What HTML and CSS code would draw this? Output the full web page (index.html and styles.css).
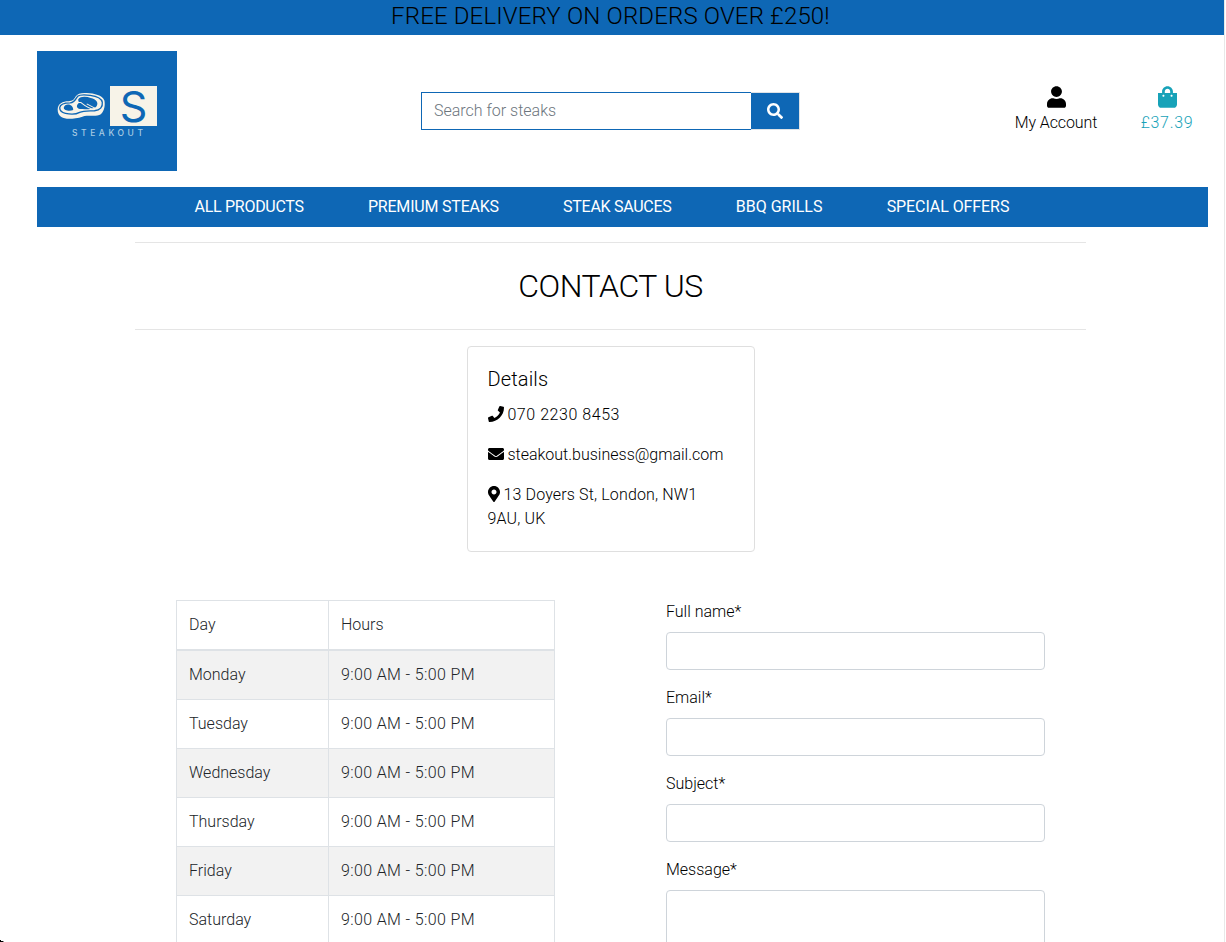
FILE: index.html
```html
<!DOCTYPE html>
<html lang="en">
<head>
<meta charset="utf-8">
<title>Steakout - Contact us</title>
<link rel="stylesheet" href="styles.css">
</head>
<body>
<div class="page">
  <div class="banner"><span>FREE DELIVERY ON ORDERS OVER £250!</span></div>
  <header class="header">
    <a class="logo" href="#">
      <svg class="steak" viewBox="0 0 142 82" preserveAspectRatio="none"><path d="M2 53C2 35 17 28 34 28C46 28 50 24 55 14C61 4 72 2 88 3C111 4 134 10 140 25C144 43 138 65 125 70C111 75 92 70 75 75C60 80 42 82 29 81C12 79 2 70 2 53Z" fill="#f7f3e8"/><path d="M8 48C9 36 22 33 39 33C53 32 54 22 61 13C68 7 83 8 98 10C119 13 132 18 134 31C136 46 127 55 111 57C93 58 78 57 67 62C55 69 38 68 25 65C13 62 8 57 8 48Z" fill="none" stroke="#0e67b5" stroke-width="4"/><path d="M20 48C22 38 31 37 38 39C46 42 48 49 48 55C38 59 20 57 20 48ZM63 22C70 12 87 14 100 18C116 22 124 32 117 43C108 54 86 52 68 52C57 49 57 41 63 35C68 30 61 28 63 22Z" fill="#0e67b5"/><path d="M62 32L71 32Q92 50 112 53M88 36L112 49" fill="none" stroke="#f7f3e8" stroke-width="3"/></svg>
      <span class="logo-s">S</span>
      <span class="logo-name">STEAKOUT</span>
    </a>
    <form class="search">
      <input class="search-input" type="text" placeholder="Search for steaks">
      <button class="search-button" type="button" aria-label="Search"><svg viewBox="0 0 512 512"><path d="M505 442.700L405.300 343c-4.500-4.500-10.600-7-17-7H372c27.600-35.300 44-79.700 44-128C416 93.100 322.900 0 208 0S0 93.100 0 208s93.100 208 208 208c48.300 0 92.700-16.400 128-44v16.300c0 6.400 2.500 12.500 7 17l99.700 99.700c9.400 9.400 24.600 9.400 33.900 0l28.300-28.300c9.400-9.400 9.400-24.600.1-34zM208 336c-70.700 0-128-57.200-128-128 0-70.700 57.200-128 128-128 70.700 0 128 57.200 128 128 0 70.700-57.200 128-128 128z"/></svg></button>
    </form>
    <div class="tools">
      <a class="tool account" href="#"><svg viewBox="0 0 448 512"><path d="M224 256c70.700 0 128-57.300 128-128S294.700 0 224 0 96 57.300 96 128s57.300 128 128 128zm89.600 32h-16.700c-22.200 10.200-46.900 16-72.900 16s-50.600-5.800-72.900-16h-16.700C60.200 288 0 348.200 0 422.400V464c0 26.500 21.500 48 48 48h352c26.500 0 48-21.500 48-48v-41.600c0-74.200-60.200-134.400-134.400-134.400z"/></svg><span>My Account</span></a>
      <a class="tool bag" href="#"><svg viewBox="0 0 448 512"><path d="M352 160v-32C352 57.420 294.579 0 224 0 153.420 0 96 57.420 96 128v32H0v272c0 44.183 35.817 80 80 80h288c44.183 0 80-35.817 80-80V160h-96zm-192-32c0-35.290 28.710-64 64-64s64 28.710 64 64v32H160v-32zm160 120c-13.255 0-24-10.745-24-24s10.745-24 24-24 24 10.745 24 24-10.745 24-24 24zm-192 0c-13.255 0-24-10.745-24-24s10.745-24 24-24 24 10.745 24 24-10.745 24-24 24z"/></svg><span>£37.39</span></a>
    </div>
  </header>
  <nav class="nav"><a class="tight" href="#">ALL PRODUCTS</a><a class="snug" href="#">PREMIUM STEAKS</a><a class="tight" href="#">STEAK SAUCES</a><a href="#">BBQ GRILLS</a><a class="offers" href="#">SPECIAL OFFERS</a></nav>
  <main class="container">
    <h1 class="title"><span>CONTACT US</span></h1>
    <section class="card">
      <h2><span>Details</span></h2>
      <p><svg class="icon" viewBox="0 0 512 512"><path d="M493.400 24.600l-104-24c-11.300-2.600-22.900 3.300-27.500 13.900l-48 112c-4.200 9.800-1.400 21.300 6.900 28l60.600 49.600c-36 76.700-98.900 140.500-177.200 177.200l-49.600-60.600c-6.800-8.300-18.200-11.100-28-6.900l-112 48C3.900 366.500-2 378.100.6 389.400l24 104C27.100 504.200 36.700 512 48 512c256.100 0 464-207.500 464-464 0-11.200-7.700-20.900-18.600-23.400z"/></svg> <span class="phone">070 2230 8453</span></p>
      <p><svg class="icon" viewBox="0 0 512 512"><path d="M502.300 190.800c3.900-3.100 9.700-.2 9.700 4.700V400c0 26.500-21.500 48-48 48H48c-26.500 0-48-21.500-48-48V195.600c0-5 5.700-7.800 9.700-4.700 22.400 17.400 52.100 39.500 154.100 113.600 21.100 15.400 56.700 47.800 92.200 47.600 35.700.3 72-32.800 92.300-47.600 102-74.100 131.600-96.300 154-113.700zM256 320c23.200.4 56.600-29.200 73.400-41.400 132.700-96.300 142.800-104.700 173.400-128.700 5.800-4.500 9.200-11.500 9.200-18.900v-19c0-26.500-21.500-48-48-48H48c-26.500 0-48 21.500-48 48v19c0 7.400 3.400 14.300 9.200 18.900 30.600 23.900 40.700 32.400 173.400 128.700 16.800 12.200 50.200 41.800 73.400 41.400z"/></svg> <span class="mail">steakout.business@gmail.com</span></p>
      <p><svg class="icon pin" viewBox="0 0 384 512"><path d="M172.268 501.670C26.970 291.031 0 269.413 0 192 0 85.961 85.961 0 192 0s192 85.961 192 192c0 77.413-26.970 99.031-172.268 309.670-9.535 13.774-29.930 13.773-39.464 0zM192 272c44.183 0 80-35.817 80-80s-35.817-80-80-80-80 35.817-80 80 35.817 80 80 80z"/></svg> <span class="address">13 Doyers St, London, NW1<br>9AU, UK</span></p>
    </section>
    <div class="columns">
      <table class="hours">
        <thead><tr><th>Day</th><th>Hours</th></tr></thead>
        <tbody>
          <tr><td>Monday</td><td>9:00 AM - 5:00 PM</td></tr>
          <tr><td>Tuesday</td><td>9:00 AM - 5:00 PM</td></tr>
          <tr><td>Wednesday</td><td>9:00 AM - 5:00 PM</td></tr>
          <tr><td>Thursday</td><td>9:00 AM - 5:00 PM</td></tr>
          <tr><td>Friday</td><td>9:00 AM - 5:00 PM</td></tr>
          <tr><td>Saturday</td><td>9:00 AM - 5:00 PM</td></tr>
        </tbody>
      </table>
      <form class="contact">
        <label for="name">Full name*</label><input id="name" type="text">
        <label for="email">Email*</label><input id="email" type="email">
        <label for="subject">Subject*</label><input id="subject" type="text">
        <label for="message">Message*</label><textarea id="message"></textarea>
      </form>
    </div>
  </main>
</div>
<i class="window-corner"></i>
</body>
</html>
```
FILE: styles.css
```css
* { box-sizing: border-box; }
html, body { height: 100%; overflow: hidden; }
body { margin: 0; background: #fff; color: #000; font: 300 16px/24px Roboto, "Liberation Sans", sans-serif; font-variant-ligatures: none; }
a { color: inherit; text-decoration: none; }
svg { display: block; fill: currentColor; }
input, textarea, button { font: inherit; }

.page { height: 942px; overflow: hidden; border-right: 1px solid #e8e8e8; width: 1225px; }
.banner { height: 35px; padding-right: 3px; background: #0e67b5; text-align: center; font-size: 24px; line-height: 32px; letter-spacing: .150px; }

.header { display: flex; height: 152px; padding: 16px 16px 16px 37px; }
.logo { display: grid; grid-template-columns: 48px 47px; grid-template-rows: 40px 12px; column-gap: 5px; row-gap: 2px; align-content: start; width: 140px; height: 120px; padding: 35px 20px; background: #0e67b5; color: #f7f3e8; }
.steak { width: 48px; height: 27px; margin-top: 6px; }
.logo-s { background: #f7f3e8; color: #0e67b5; font: 400 43px/40px Inter, sans-serif; text-align: center; }
.logo-name { grid-column: 1 / 3; padding-left: 15px; font: 500 8.500px/11px Inter, sans-serif; letter-spacing: 3.550px; color: #a8cbe3; }

.search { display: flex; width: 379px; height: 38px; margin: 41px 0 0 244px; }
.search-input { width: 330px; padding: 6px 12px; border: 1px solid #0e67b5; border-right: 0; border-radius: 0; outline: 0; }
.search-input::placeholder { color: #6c757d; opacity: 1; }
.search-button { display: flex; flex: none; align-items: center; justify-content: center; width: 49px; padding: 0; border: 1px solid #dee2e6; border-left: 0; background: #0e67b5; color: #fff; }
.search-button svg { width: 16px; height: 16px; }

.tools { display: flex; margin: 35px 0 0 195px; }
.tool { display: flex; flex-direction: column; align-items: center; width: 122px; }
.tool svg { width: 19px; height: 22px; margin-bottom: 3px; }
.account { letter-spacing: -.100px; }
.bag { width: 100px; color: #17a2b8; letter-spacing: .700px; }

.nav { display: flex; gap: 64.200px; height: 40px; margin: 0 16px 0 37px; padding-left: 157.500px; background: #0e67b5; color: #fff; font-weight: 400; line-height: 39px; }
.tight { letter-spacing: -.280px; }
.snug { letter-spacing: -.200px; }
.offers { letter-spacing: -.080px; }

.container { width: 951px; margin: 15px 0 0 135px; }
.title { height: 88px; margin: 0; border: solid #e5e5e5; border-width: 1px 0; text-align: center; font-size: 32px; font-weight: 300; line-height: 86px; letter-spacing: -.450px; }
.card { width: 288px; height: 206px; margin: 16px 0 48px 332px; padding: 20px 19.500px; border: 1px solid #dfdfdf; border-radius: 4px; }
.card h2 { margin: 0 0 12px; font-size: 20px; font-weight: 300; line-height: 24px; letter-spacing: .150px; }
.card p { margin: 0 0 16px; }
.icon { display: inline-block; width: 16px; height: 16px; vertical-align: -2px; }
.pin { width: 12px; }
.phone { letter-spacing: .550px; }
.address { letter-spacing: .150px; }

.columns { display: flex; align-items: flex-start; gap: 111px; padding-left: 41px; }
.hours { width: 379px; border-collapse: collapse; table-layout: fixed; color: #212529; }
.hours th, .hours td { height: 49px; padding: 12px; border: 1px solid #dee2e6; text-align: left; font-weight: 300; line-height: 24px; }
.hours th:first-child { width: 152px; }
.hours th { border-bottom-width: 2px; }
.hours td:last-child { letter-spacing: .370px; }
.hours tbody tr:nth-child(odd) { background: #f2f2f2; }
.contact { display: flex; flex-direction: column; width: 379px; }
.contact label { height: 24px; margin-bottom: 8px; line-height: 23px; }
.contact input { height: 38px; margin: 0 0 16px; border: 1px solid #ced4da; border-radius: 4px; }
.contact textarea { height: 240px; border: 1px solid #ced4da; border-radius: 4px; resize: none; }

.window-corner { position: absolute; left: 0; bottom: 0; width: 7px; height: 3px; background: radial-gradient(ellipse 7px 3px at 100% 0, transparent 95%, #000 100%); }
```
